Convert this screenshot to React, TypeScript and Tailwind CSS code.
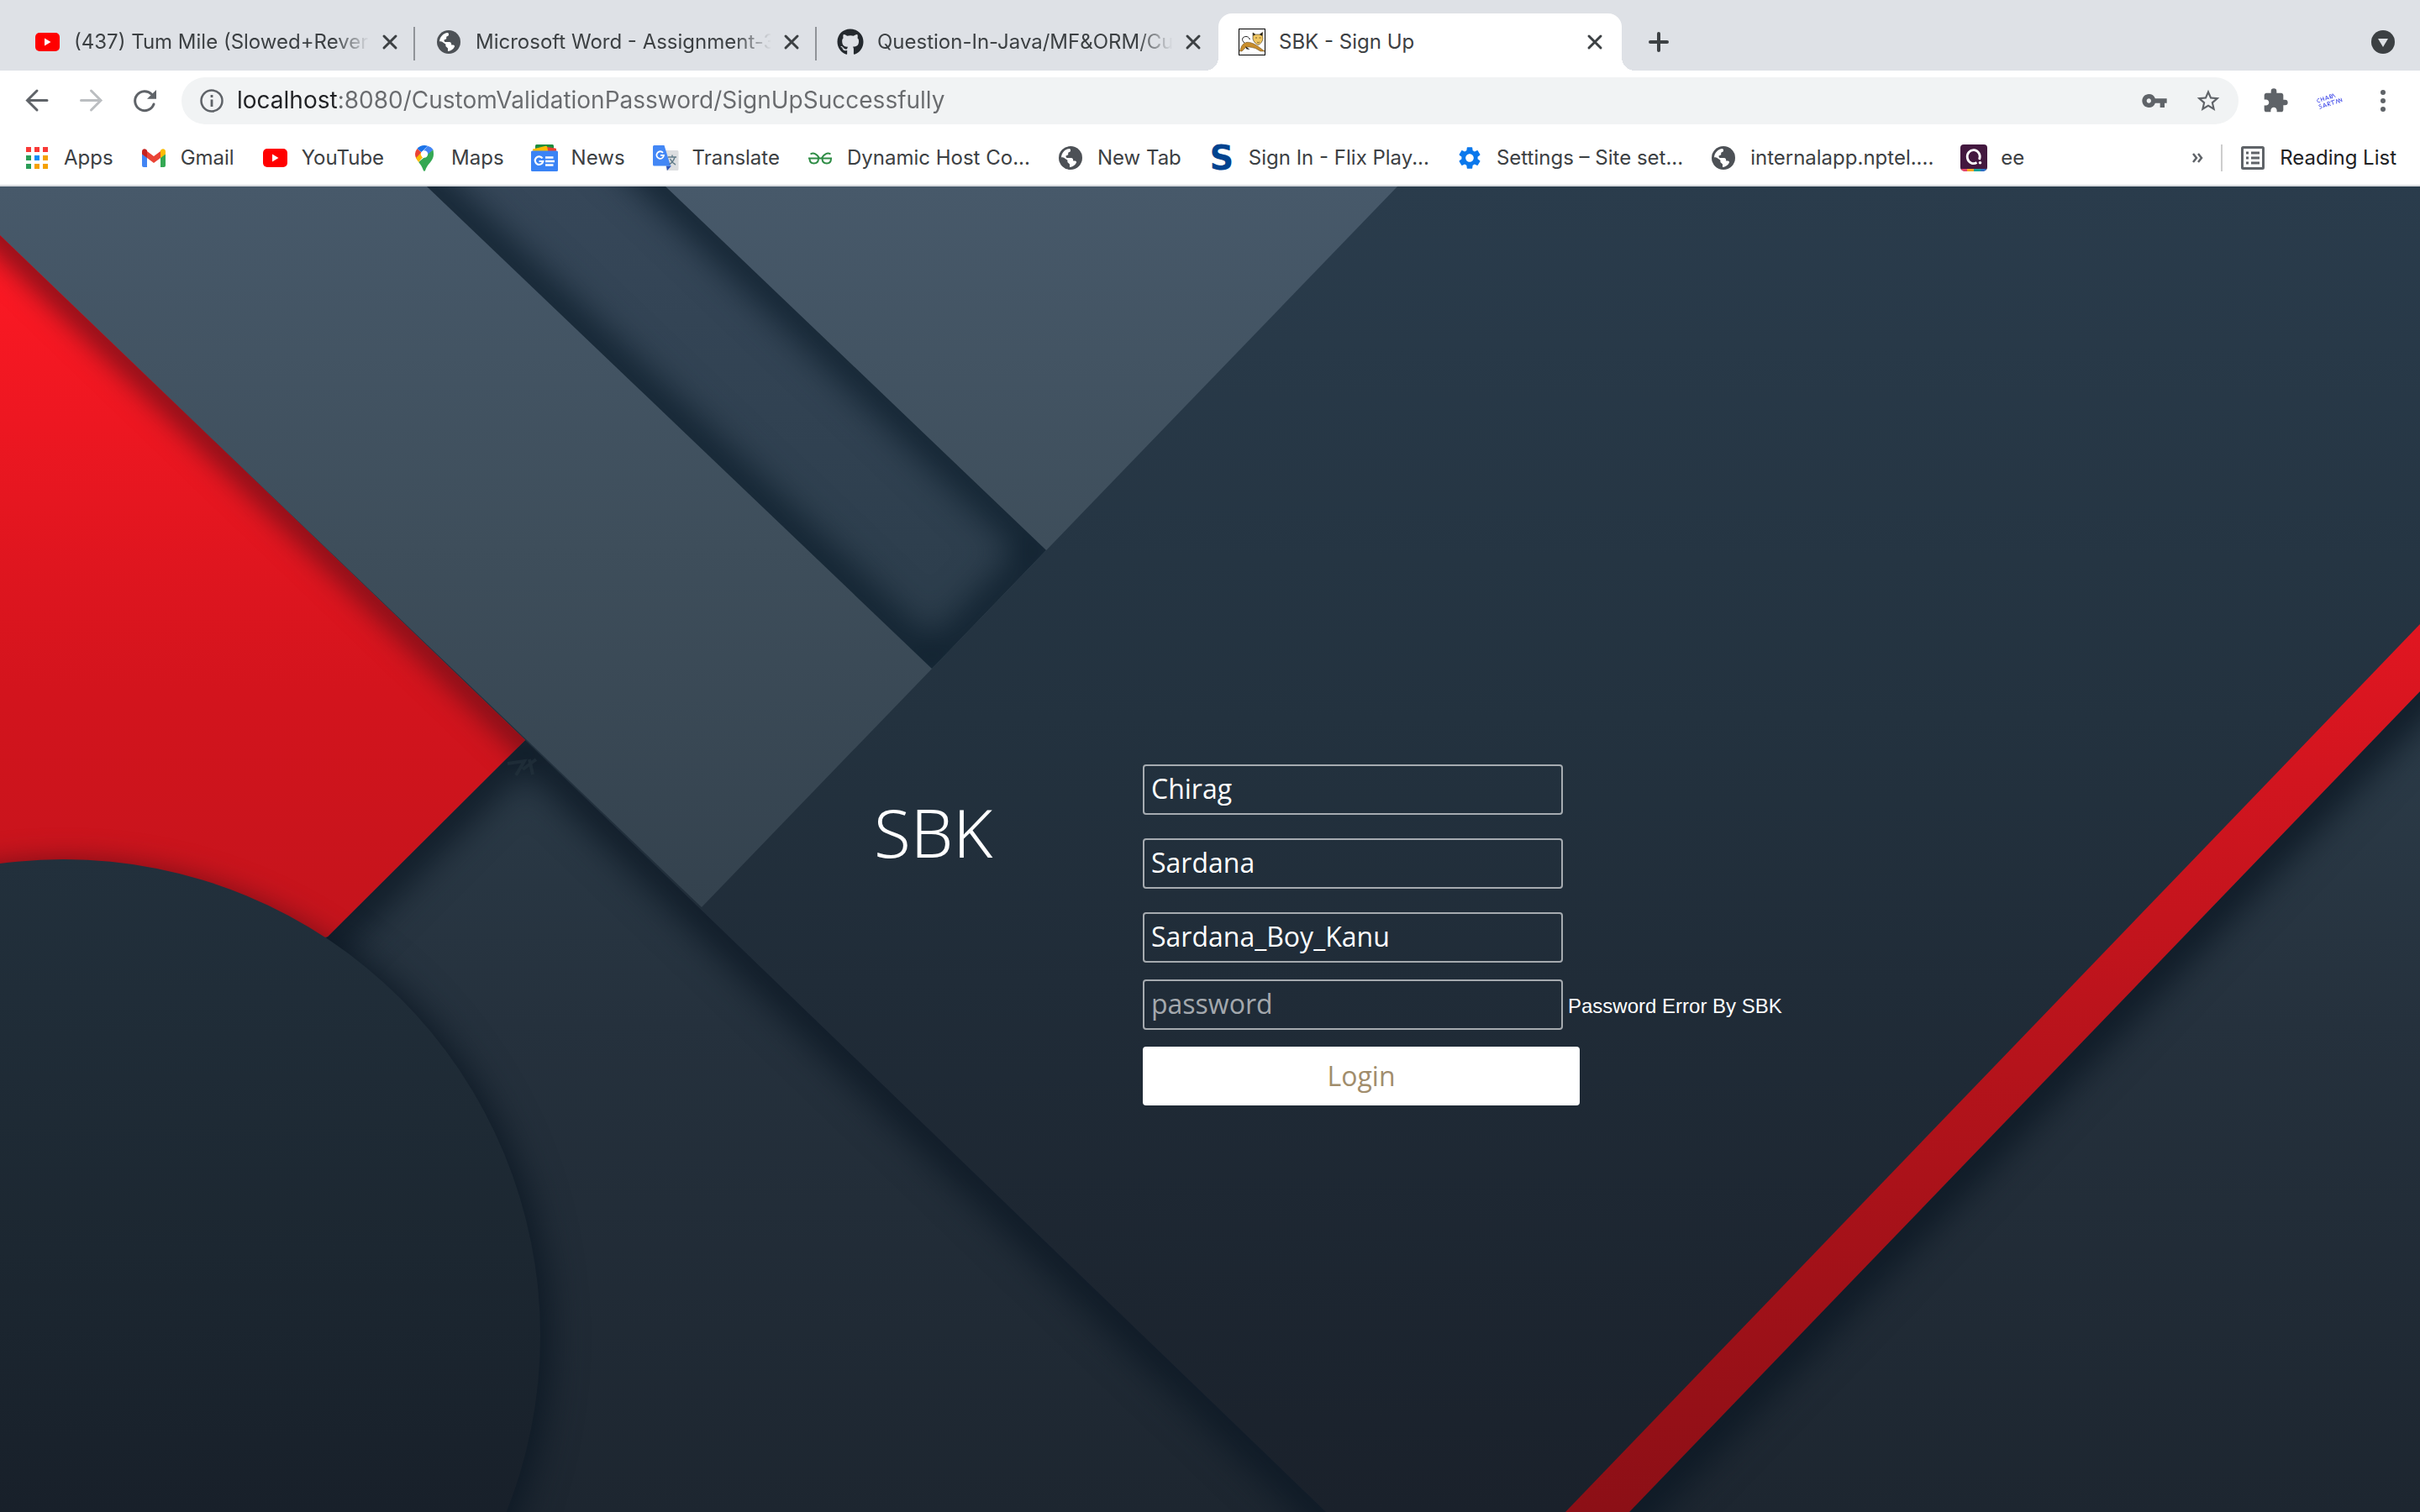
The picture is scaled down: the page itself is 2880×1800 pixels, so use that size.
import type { ReactNode } from "react";
import { FaGithub } from "react-icons/fa";
import { MdExtension, MdStarBorder, MdVpnKey, MdSettings } from "react-icons/md";

function YouTubeIcon() {
  return (
    <svg viewBox="0 0 32 32" className="size-8 shrink-0" aria-hidden="true">
      <rect x="2" y="5" width="29" height="22" rx="5" fill="#ff0000" />
      <path d="M13 11.5v9l7.5-4.5z" fill="#fff" />
    </svg>
  );
}

function GlobeIcon() {
  return (
    <svg viewBox="0 0 32 32" className="size-8 shrink-0" aria-hidden="true">
      <circle cx="16" cy="16" r="14" fill="#4d5156" />
      <path
        d="M5 16C5 10 9.5 5.4 15 5c1.2.8 1.4 2.2 .6 3.4l-2.4 1.4v2.4l-3 1.6 1.2 2.2h5.2c2.2 0 2.6 1.6 2.6 3.4h2.2c1.2 0 1.8 1 1.6 2.2C21.400 24.800 18.800 26.800 15 27v-3.400l-2.600-2.600v-2.200L8.200 15.800 5.600 15z"
        fill="#fff"
      />
      <path d="M19.500 5.600l-1.200 3 1.800 2.200 1.400 3.200 5 1.200c-.4-4.400-3-8-7-9.600z" fill="#4d5156" />
    </svg>
  );
}

function CatIcon() {
  return (
    <svg viewBox="0 0 32 32" className="size-8 shrink-0" aria-hidden="true">
      <rect x=".5" y=".5" width="31" height="31" fill="#fff" stroke="#000" />
      <path d="M7 17C3 14 4 9.500 9 9.500c2 0 3 1 3.500 2" fill="none" stroke="#222" strokeWidth="1" />
      <path d="M1.500 27c1-5 3.500-9.500 7.500-10.500 3-.8 6 .5 9 1.500l5 3 8 6h-5l-6-3.500c-3-.5-5-1.500-8-1.500-3 0-4 1-5.500 2.500L4 27z" fill="#c88d2c" stroke="#5b431c" strokeWidth=".5" />
      <path d="M17 5l3 2h5l3.500-2.500.5 8c-1 3.500-3 6-5.500 7-3-1-5.500-3.500-6.500-7z" fill="#f0c660" stroke="#3b3020" strokeWidth=".6" />
      <path d="M17 5l3 2.200-2.500 1.500zM28.500 4.500L25 7.200l3 1.500zM8 21l5.500 4-4-.5zM12 11l2 1-1 1.500z" fill="#1c1c1c" />
      <path d="M20 11h2M24.500 11h2M22 16l1.500 1 1.500-1" fill="none" stroke="#5b431c" strokeWidth=".8" />
    </svg>
  );
}

function AppsIcon() {
  const colors = ["#f93a37", "#f93a37", "#f93a37", "#2a9d57", "#0b8cf5", "#f5a100", "#2a9d57", "#f5a100", "#f5a100"];
  return (
    <svg viewBox="0 0 32 32" className="size-8 shrink-0" aria-hidden="true">
      {colors.map((c, i) => (
        <rect key={i} x={3 + (i % 3) * 10} y={3 + Math.floor(i / 3) * 10} width="6" height="6" fill={c} />
      ))}
    </svg>
  );
}

function GmailIcon() {
  return (
    <svg viewBox="0 0 32 32" className="size-8 shrink-0" aria-hidden="true">
      <path d="M2 11l6 4.500V27H4a2 2 0 0 1-2-2z" fill="#4285f4" />
      <path d="M30 11l-6 4.500V27h4a2 2 0 0 0 2-2z" fill="#34a853" />
      <path d="M8 8l8 6 8-6v8l-8 6-8-6z" fill="#ea4335" />
      <path d="M2 11V8.500C2 5.500 5 4.500 7 6l1 1v9l-6-4.500z" fill="#c5221f" />
      <path d="M30 11V8.500C30 5.500 27 4.500 25 6l-1 1v9l6-4.500z" fill="#fbbc04" />
    </svg>
  );
}

function MapsIcon() {
  return (
    <svg viewBox="0 0 32 32" className="size-8 shrink-0" aria-hidden="true">
      <path d="M16 1a11 11 0 0 0-8.500 4l5 4.200L20 1.800A11 11 0 0 0 16 1z" fill="#1a73e8" />
      <path d="M20 1.700l-7 8.200 3-2.200 4.500 5L26.500 6A11 11 0 0 0 20 1.700z" fill="#4285f4" />
      <path d="M7.500 5A11 11 0 0 0 6.500 17l6-7.500z" fill="#ea4335" />
      <path d="M26.500 6.200L9.200 21c2.500 3.200 4.300 5.500 5.600 9.800.4 1.200 2 1.200 2.400 0 2.300-8 9.800-10.800 9.800-19.300 0-2-.300-3.700-.5-5.300z" fill="#34a853" />
      <path d="M6 16c.6 1.800 2 3.500 3.200 5l9.300-11-6-.5z" fill="#fbbc04" />
      <circle cx="16" cy="11.500" r="4.200" fill="#fff" />
    </svg>
  );
}

function NewsIcon() {
  return (
    <svg viewBox="0 0 32 32" className="size-8 shrink-0" aria-hidden="true">
      <path d="M5 1.500A1.500 1.500 0 0 1 6.500 0h19A1.500 1.500 0 0 1 27 1.500V10H5z" fill="#1e8e3e" />
      <path d="M19 3l10 1.500c1 .2 1.300 1 1 2L29 12H17z" fill="#ea4335" />
      <path d="M2 5.500L17.500 1.800c.8-.1 1.400.2 1.600 1L21 11H3z" fill="#fbbc04" />
      <rect y="7.500" width="32" height="24.500" rx="1.500" fill="#3a83f5" />
      <path d="M13.500 16.300A4.800 4.800 0 1 0 14.300 20H9.500" fill="none" stroke="#fff" strokeWidth="2.200" />
      <path d="M17 15.500h9.500M17 20h11M17 24.500h9.500" stroke="#fff" strokeWidth="2.400" />
    </svg>
  );
}

function TranslateIcon() {
  return (
    <svg viewBox="0 0 32 32" className="size-8 shrink-0" aria-hidden="true">
      <path d="M13 7h17a1.500 1.500 0 0 1 1.500 1.500v21A1.500 1.500 0 0 1 30 31H17z" fill="#dcdee0" />
      <path d="M17 25.500h6L18 31z" fill="#2a52b8" />
      <path d="M2.500 1h12L22 25.500H2.500A1.500 1.500 0 0 1 1 24V2.500A1.500 1.500 0 0 1 2.500 1z" fill="#4387f5" />
      <path d="M13 9.800A4.300 4.300 0 1 0 14 12.800H10" fill="none" stroke="#fff" strokeWidth="1.800" />
      <path d="M19 15h10M24 12.500V15M27 15c-1 4-3.500 7-6.500 8.500M21.500 17c1.500 3 3.500 5.500 6.500 7" fill="none" stroke="#607b88" strokeWidth="1.400" />
    </svg>
  );
}

function GeeksIcon() {
  return (
    <svg viewBox="0 0 32 32" className="size-8 shrink-0" aria-hidden="true" fill="none" stroke="#2f8d46" strokeWidth="2">
      <path d="M4.500 11.500c3.500-2 7.500-1 11 5.500M2 16.500h28M3.500 16.500c0 4 2 6 5 6 3.500 0 5.500-2.500 5.500-6" />
      <path d="M28.500 11.500c-3.500-2-7.500-1-11 5.500M29 16.500c0 4-2 6-5 6-3.500 0-5.500-2.500-5.500-6" />
    </svg>
  );
}

function LetterSIcon() {
  return (
    <span className="flex size-8 shrink-0 items-center justify-center font-['DejaVu_Sans',sans-serif] text-[40px] leading-8 font-bold text-[#00438f]" aria-hidden="true">
      S
    </span>
  );
}

function QuestIcon() {
  return (
    <svg viewBox="0 0 32 32" className="size-8 shrink-0" aria-hidden="true">
      <rect width="32" height="31" rx="4" fill="#43183f" />
      <path d="M1 29h7v3H4a4 4 0 0 1-3-3z" fill="#e5476b" />
      <path d="M8 29h8v3H8z" fill="#f7a823" />
      <path d="M16 29h8v3h-8z" fill="#17a59b" />
      <path d="M24 29h7a4 4 0 0 1-3 3h-4z" fill="#2f6fc4" />
      <path d="M19.500 21.500A7.500 8 0 1 1 22.500 18" fill="none" stroke="#fff" strokeWidth="2.800" />
      <circle cx="23.500" cy="21.800" r="1.800" fill="#fff" />
    </svg>
  );
}

function ReadingListIcon() {
  return (
    <svg viewBox="0 0 32 32" className="size-8 shrink-0" aria-hidden="true" stroke="#5f6368" strokeWidth="3" fill="none">
      <rect x="3.500" y="3.500" width="25" height="25" rx="1" />
      <path d="M8 10h3M14 10h10M8 16h3M14 16h10M8 22h3M14 22h10" />
    </svg>
  );
}

function CloseIcon() {
  return (
    <svg viewBox="0 0 32 32" className="size-8" aria-hidden="true">
      <path d="M9 9l14 14M23 9L9 23" stroke="#3c4043" strokeWidth="3" strokeLinecap="round" />
    </svg>
  );
}

function Tab({ icon, title, active, divider }: { icon: ReactNode; title: string; active?: boolean; divider?: boolean }) {
  return (
    <div className={active ? "relative flex w-[480px] items-center rounded-t-2xl bg-white pr-4 pl-6" : "relative flex w-[478px] items-center pr-3.5 pl-6"}>
      {active && (
        <>
          <span className="absolute bottom-0 -left-4 size-4 bg-[radial-gradient(circle_at_0_0,transparent_16px,white_16px)]" />
          <span className="absolute -right-4 bottom-0 size-4 bg-[radial-gradient(circle_at_100%_0,transparent_16px,white_16px)]" />
        </>
      )}
      {icon}
      <span
        className={
          active
            ? "ml-4 flex-1 overflow-hidden whitespace-nowrap"
            : "ml-4 flex-1 overflow-hidden whitespace-nowrap [mask-image:linear-gradient(to_right,black_88%,transparent)]"
        }
      >
        {title}
      </span>
      <button type="button" aria-label={`Close ${title}`} className="ml-2">
        <CloseIcon />
      </button>
      {divider && <span className="absolute top-4 right-0 h-10 w-0.5 bg-[#909398]" />}
    </div>
  );
}

const bookmarks: { label: string; icon: ReactNode }[] = [
  { label: "Apps", icon: <AppsIcon /> },
  { label: "Gmail", icon: <GmailIcon /> },
  { label: "YouTube", icon: <YouTubeIcon /> },
  { label: "Maps", icon: <MapsIcon /> },
  { label: "News", icon: <NewsIcon /> },
  { label: "Translate", icon: <TranslateIcon /> },
  { label: "Dynamic Host Co...", icon: <GeeksIcon /> },
  { label: "New Tab", icon: <GlobeIcon /> },
  { label: "Sign In - Flix Play...", icon: <LetterSIcon /> },
  { label: "Settings – Site set...", icon: <MdSettings className="size-8 shrink-0 text-[#0b78ec]" /> },
  { label: "internalapp.nptel....", icon: <GlobeIcon /> },
  { label: "ee", icon: <QuestIcon /> },
];

function BrowserChrome() {
  return (
    <header className="border-b-2 border-[#d9dce0] bg-white font-['Inter',sans-serif] text-2xl text-[#3c4043]">
      <div className="flex h-[84px] bg-[#dee1e6] pt-4 pr-7 pl-4">
        <Tab icon={<YouTubeIcon />} title="(437) Tum Mile (Slowed+Reverb)" divider />
        <Tab icon={<GlobeIcon />} title="Microsoft Word - Assignment-3.docx" divider />
        <Tab icon={<FaGithub className="size-8 shrink-0 text-[#24292e]" />} title="Question-In-Java/MF&ORM/Custom" />
        <Tab icon={<CatIcon />} title="SBK - Sign Up" active />
        <button type="button" aria-label="New tab" className="ml-7">
          <svg viewBox="0 0 32 32" className="size-8" aria-hidden="true">
            <path d="M16 6v20M6 16h20" stroke="#3c4043" strokeWidth="4" strokeLinecap="round" />
          </svg>
        </button>
        <button type="button" aria-label="Search tabs" className="ml-auto">
          <svg viewBox="0 0 32 32" className="size-8" aria-hidden="true">
            <circle cx="16" cy="16" r="14" fill="#3c4043" />
            <path d="M10 12h12l-6 10z" fill="#dee1e6" />
          </svg>
        </button>
      </div>

      <div className="flex items-center px-7 py-2">
        <nav className="flex gap-8" aria-label="History">
          <button type="button" aria-label="Back">
            <svg viewBox="0 0 32 32" className="size-8" fill="none" stroke="#5f6368" strokeWidth="3" strokeLinecap="round" aria-hidden="true">
              <path d="M28 15.500H4.500M16 4L4.500 15.500 16 27" />
            </svg>
          </button>
          <button type="button" aria-label="Forward" disabled>
            <svg viewBox="0 0 32 32" className="size-8" fill="none" stroke="#bbbec1" strokeWidth="3" strokeLinecap="round" aria-hidden="true">
              <path d="M4.500 15.500H28M16.500 4L28 15.500 16.500 27" />
            </svg>
          </button>
          <button type="button" aria-label="Reload">
            <svg viewBox="0 0 32 32" className="size-8" aria-hidden="true">
              <path d="M27 20A11.500 11.500 0 1 1 24.500 8.200" fill="none" stroke="#5f6368" strokeWidth="3" strokeLinecap="round" />
              <path d="M30 3v10.700H19z" fill="#5f6368" />
            </svg>
          </button>
        </nav>
        <div className="ml-7 flex h-14 flex-1 items-center rounded-full bg-[#f1f3f4] px-5">
          <svg viewBox="0 0 32 32" className="size-8 shrink-0" aria-hidden="true">
            <circle cx="16" cy="16" r="12.500" fill="none" stroke="#5f6368" strokeWidth="2.500" />
            <path d="M16 14.500V23M16 9v3" stroke="#5f6368" strokeWidth="2.800" />
          </svg>
          <input
            type="text"
            aria-label="Address"
            defaultValue="localhost:8080/CustomValidationPassword/SignUpSuccessfully"
            className="ml-3.5 min-w-0 flex-1 bg-[linear-gradient(to_right,#202124_121px,#696b6e_121px)] bg-clip-text text-[28px] text-transparent outline-none"
          />
          <div className="flex gap-8 text-[#5f6368]">
            <button type="button" aria-label="Passwords">
              <MdVpnKey className="size-8" />
            </button>
            <button type="button" aria-label="Bookmark this page">
              <MdStarBorder className="size-8" />
            </button>
          </div>
        </div>
        <div className="ml-7 flex gap-8 text-[#5f6368]">
          <button type="button" aria-label="Extensions">
            <MdExtension className="size-8" />
          </button>
          <button type="button" aria-label="Profile">
            <svg viewBox="0 0 32 32" className="size-8" aria-hidden="true" fill="none" stroke="#3a44e8" strokeWidth=".9">
              <g transform="translate(0 5) rotate(-17 16 10) scale(1 .7)">
                <path d="M5 7c-4-1-4 7 0 6M7 6v7M7 9.500h3M10 6v7M12 13l2-7 2 7M13 11h3M18 13V6c3 0 3 3 0 3.500l2 3.500M20 13l2-7 2 7" />
                <path d="M5 17c-4 0-3 3-1 3.500s2 3.500-2 3.500M7 24l2-7 2 7M8 22h3M13 24v-7c4 0 4 3 0 3.500l3 3.500M17 17h5M19 17v7M23 24l1.500-7 2 7M27 24v-7l3 6v-6" />
              </g>
            </svg>
          </button>
          <button type="button" aria-label="Menu">
            <svg viewBox="0 0 32 32" className="size-8" fill="#5f6368" aria-hidden="true">
              <circle cx="16" cy="6" r="3" />
              <circle cx="16" cy="16" r="3" />
              <circle cx="16" cy="26" r="3" />
            </svg>
          </button>
        </div>
      </div>

      <nav className="flex h-16 items-center px-7" aria-label="Bookmarks">
        <ul className="flex items-center gap-8">
          {bookmarks.map((b) => (
            <li key={b.label}>
              <a href="#" className="flex items-center gap-4 whitespace-nowrap">
                {b.icon}
                {b.label}
              </a>
            </li>
          ))}
        </ul>
        <button type="button" aria-label="More bookmarks" className="ml-auto">
          <svg viewBox="0 0 16 16" className="size-4" fill="none" stroke="#5f6368" strokeWidth="2.500" aria-hidden="true">
            <path d="M3 3l4 5-4 5M9 3l4 5-4 5" />
          </svg>
        </button>
        <span className="mx-5 h-8 w-0.5 bg-[#cdcdcd]" />
        <a href="#" className="flex items-center gap-4 whitespace-nowrap text-[#202124]">
          <ReadingListIcon />
          Reading List
        </a>
      </nav>
    </header>
  );
}

function Backdrop() {
  return (
    <svg viewBox="0 222 2880 1578" preserveAspectRatio="xMidYMid slice" className="absolute inset-0 h-full w-full" aria-hidden="true">
      <defs>
        <linearGradient id="steel" gradientUnits="userSpaceOnUse" x1="0" y1="222" x2="0" y2="1080">
          <stop offset="0" stopColor="#47596a" />
          <stop offset=".5" stopColor="#3e4e5b" />
          <stop offset="1" stopColor="#34424e" />
        </linearGradient>
        <linearGradient id="channel" gradientUnits="userSpaceOnUse" x1="0" y1="222" x2="0" y2="800">
          <stop offset="0" stopColor="#364759" />
          <stop offset="1" stopColor="#2b3c4a" />
        </linearGradient>
        <linearGradient id="navy" gradientUnits="userSpaceOnUse" x1="0" y1="222" x2="0" y2="1800">
          <stop offset="0" stopColor="#2a3c4c" />
          <stop offset=".4" stopColor="#23323f" />
          <stop offset=".6" stopColor="#202c38" />
          <stop offset="1" stopColor="#1a212b" />
        </linearGradient>
        <linearGradient id="red" gradientUnits="userSpaceOnUse" x1="0" y1="280" x2="0" y2="1115">
          <stop offset="0" stopColor="#ff1924" />
          <stop offset=".65" stopColor="#d3141d" />
          <stop offset="1" stopColor="#c4141c" />
        </linearGradient>
        <linearGradient id="slate" gradientUnits="userSpaceOnUse" x1="0" y1="830" x2="0" y2="1800">
          <stop offset="0" stopColor="#2c3c49" />
          <stop offset=".4" stopColor="#25313d" />
          <stop offset="1" stopColor="#1d2630" />
        </linearGradient>
        <linearGradient id="disc" gradientUnits="userSpaceOnUse" x1="0" y1="1023" x2="0" y2="1800">
          <stop offset="0" stopColor="#22303c" />
          <stop offset=".6" stopColor="#1c2731" />
          <stop offset="1" stopColor="#18202a" />
        </linearGradient>
        <linearGradient id="stripe" gradientUnits="userSpaceOnUse" x1="0" y1="743" x2="0" y2="1800">
          <stop offset="0" stopColor="#e11621" />
          <stop offset=".5" stopColor="#b5131b" />
          <stop offset="1" stopColor="#8c0f16" />
        </linearGradient>
        <filter id="soft" filterUnits="userSpaceOnUse" x="-400" y="-200" width="3700" height="2400" colorInterpolationFilters="sRGB">
          <feGaussianBlur stdDeviation="22" />
        </filter>
        <filter id="tight" filterUnits="userSpaceOnUse" x="-400" y="-200" width="3700" height="2400" colorInterpolationFilters="sRGB">
          <feGaussianBlur stdDeviation="16" />
        </filter>
        <clipPath id="redArea">
          <path d="M0 280L625 881 390 1115 0 1200z" />
        </clipPath>
        <clipPath id="channelArea">
          <path d="M508 222H792L1245 655 1109 796z" />
        </clipPath>
        <clipPath id="slateLeft">
          <path d="M625 881L1578 1800H0V1500L390 1115z" />
        </clipPath>
        <clipPath id="slateRight">
          <path d="M2880 823L1939 1800H2880z" />
        </clipPath>
      </defs>

      <rect y="222" width="2880" height="1578" fill="url(#navy)" />
      <path d="M0 222H1663L835 1080 0 281z" fill="url(#steel)" />
      <path d="M508 222H792L1245 655 1109 796z" fill="url(#channel)" />
      <g clipPath="url(#channelArea)">
        <path d="M300 22L1109 796 1245 655 583 22" fill="none" stroke="#0d1e2c" strokeWidth="40" filter="url(#soft)" />
      </g>

      <path d="M625 881L1578 1800H0V1500L390 1115z" fill="url(#slate)" />
      <g clipPath="url(#slateLeft)">
        <path d="M300 1205L625 881 1700 1918" fill="none" stroke="#0c1824" strokeWidth="42" filter="url(#soft)" />
        <circle cx="84" cy="1594" r="568" fill="#0c1824" filter="url(#soft)" />
      </g>
      <path d="M604 909l20-3-10 17M622 916l16-12M630 904l4 18" fill="none" stroke="#25333e" strokeWidth="4" strokeOpacity=".6" />

      <path d="M0 280L625 881 390 1115 0 1200z" fill="url(#red)" />
      <g clipPath="url(#redArea)">
        <path d="M-200 88L800 1049" fill="none" stroke="#7a0f18" strokeWidth="32" filter="url(#tight)" />
        <circle cx="76" cy="1590" r="567" fill="#7a0f18" filter="url(#tight)" />
      </g>
      <circle cx="76" cy="1590" r="567" fill="url(#disc)" />

      <path d="M2880 823L1939 1800H2880z" fill="url(#slate)" />
      <g clipPath="url(#slateRight)">
        <path d="M3000 699L1800 1945" fill="none" stroke="#0c1824" strokeWidth="48" filter="url(#soft)" />
      </g>
      <path d="M2880 743V823L1939 1800H1863z" fill="url(#stripe)" />
    </svg>
  );
}

const fieldClass =
  "h-[60px] w-[500px] rounded-[4px] border-2 border-white/60 bg-transparent px-2 pb-1 text-[32px] text-white outline-none placeholder:text-white/60";

function SignUpForm() {
  return (
    <div className="relative flex items-start pt-[204px] pl-10 font-['Open_Sans',sans-serif]">
      <h1 className="mt-10 w-80 font-['Noto_Sans',sans-serif] text-[80px] leading-none font-light text-white">SBK</h1>
      <form className="flex w-[520px] flex-col gap-5" onSubmit={(e) => e.preventDefault()}>
        <div className="flex flex-col gap-7">
          <input type="text" aria-label="First name" defaultValue="Chirag" className={fieldClass} />
          <input type="text" aria-label="Last name" defaultValue="Sardana" className={fieldClass} />
          <input type="text" aria-label="User name" defaultValue="Sardana_Boy_Kanu" className={fieldClass} />
        </div>
        <div className="flex items-center gap-1.5">
          <input type="password" aria-label="Password" aria-describedby="password-error" placeholder="password" className={`${fieldClass} shrink-0`} />
          <span id="password-error" className="pt-1 font-['Liberation_Sans',sans-serif] text-2xl whitespace-nowrap text-white">
            Password Error By SBK
          </span>
        </div>
        <button type="submit" className="h-[70px] rounded-[4px] bg-white text-[32px] text-[#a18d6c]">
          Login
        </button>
      </form>
    </div>
  );
}

export default function App() {
  return (
    <div className="flex min-h-screen flex-col">
      <BrowserChrome />
      <main className="relative flex flex-1 items-center justify-center overflow-hidden">
        <Backdrop />
        <SignUpForm />
      </main>
    </div>
  );
}
